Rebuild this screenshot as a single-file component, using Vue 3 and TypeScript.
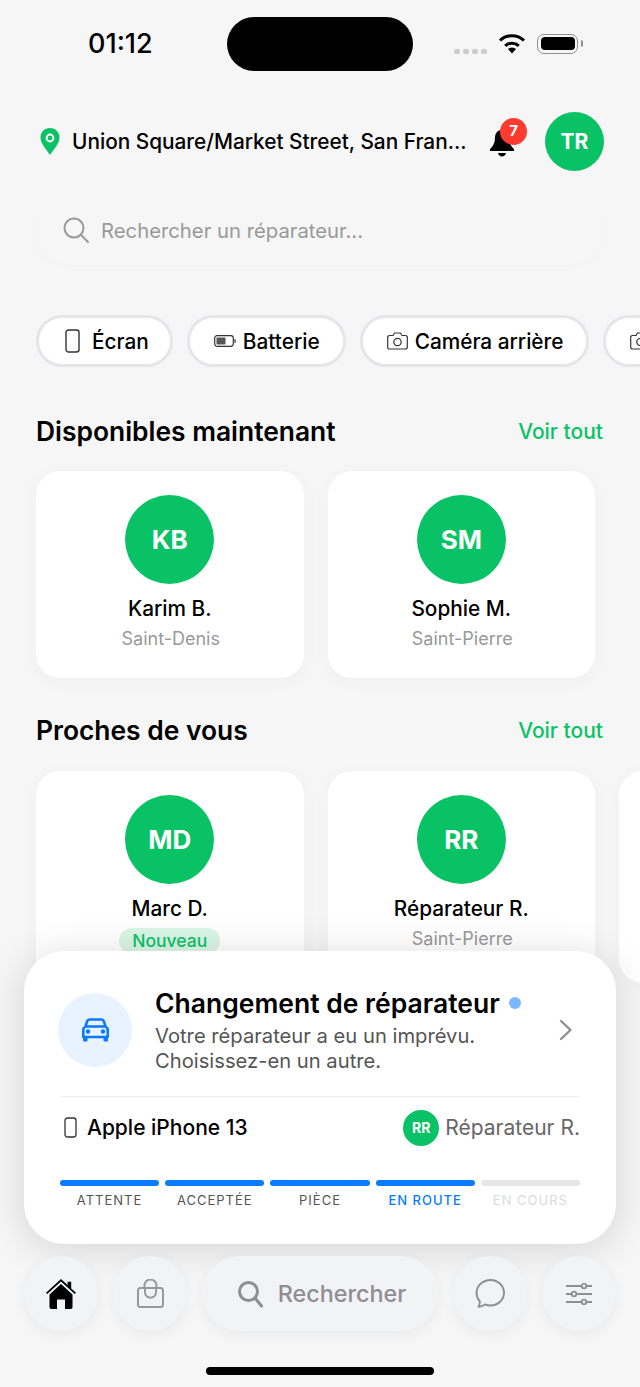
<template>
  <div class="screen">
    <!-- Status bar -->
    <div class="status-bar">
      <span class="time">01:12</span>
      <div class="island"></div>
      <div class="status-icons">
        <div class="signal"><i v-for="n in 4" :key="n"></i></div>
        <svg class="wifi" width="28" height="21" viewBox="0 0 28 21">
          <path d="M14 20.500 10 16a5.800 5.800 0 0 1 8 0Z" fill="#000" />
          <path d="M7.200 12.800a10 10 0 0 1 13.600 0" fill="none" stroke="#000" stroke-width="3" />
          <path d="M2 7.500a17.400 17.400 0 0 1 24 0" fill="none" stroke="#000" stroke-width="3" />
        </svg>
        <div class="battery"><div class="battery-fill"></div></div>
        <div class="battery-cap"></div>
      </div>
    </div>

    <!-- Location header -->
    <div class="header">
      <svg class="pin" width="20" height="27" viewBox="0 0 20 27">
        <path d="M10 0C4.500 0 .5 4.200.5 9.500.5 15.500 6 21 10 27c4-6 9.500-11.500 9.500-17.500C19.500 4.200 15.500 0 10 0Z" fill="#0ac266" />
        <circle cx="10" cy="10" r="3.400" fill="none" stroke="#fff" stroke-width="2" />
      </svg>
      <span class="location">Union Square/Market Street, San Fran...</span>
      <div class="bell">
        <svg width="26" height="27" viewBox="0 0 26 27">
          <path d="M13 0C8.500 0 6 3.500 6 8c0 5-2 8-4.800 11-.7.800-.3 2 .8 2h22c1.100 0 1.500-1.200.8-2C22 16 20 13 20 8c0-4.500-2.500-8-7-8Z" fill="#000" />
          <path d="M9 23h8c-.5 2.300-2 3.500-4 3.500S9.500 25.300 9 23Z" fill="#000" />
        </svg>
        <span class="bell-badge">7</span>
      </div>
      <div class="avatar-top">TR</div>
    </div>

    <!-- Search -->
    <div class="search">
      <svg width="28" height="28" viewBox="0 0 28 28" fill="none" stroke="#999" stroke-width="2">
        <circle cx="12" cy="12" r="9.500" />
        <path d="m19 19 7 7" stroke-linecap="round" />
      </svg>
      <span>Rechercher un réparateur...</span>
    </div>

    <!-- Category chips -->
    <div class="chips">
      <div class="chip chip-screen">
        <svg width="15" height="24" viewBox="0 0 15 24" fill="none" stroke="#333" stroke-width="1.400">
          <rect x="1" y="1" width="13" height="22" rx="2.500" />
        </svg>
        Écran
      </div>
      <div class="chip">
        <svg width="22" height="12" viewBox="0 0 22 12">
          <rect x=".7" y=".7" width="18.600" height="10.600" rx="2.500" fill="none" stroke="#333" stroke-width="1.200" />
          <rect x="2.500" y="2.500" width="9" height="7" rx="1" fill="#555" />
          <rect x="20.300" y="4" width="1.500" height="4" rx=".7" fill="#555" />
        </svg>
        Batterie
      </div>
      <div class="chip">
        <svg width="21" height="18" viewBox="0 0 21 18" fill="none" stroke="#333" stroke-width="1.200">
          <path d="M2.500 3.500h3.500l1.500-2.500h6l1.500 2.500h3.500a1.800 1.800 0 0 1 1.800 1.800v9.900a1.800 1.800 0 0 1-1.800 1.800h-16a1.800 1.800 0 0 1-1.800-1.800V5.300a1.800 1.800 0 0 1 1.800-1.800Z" />
          <circle cx="10.500" cy="10" r="3.700" />
        </svg>
        Caméra arrière
      </div>
      <div class="chip">
        <svg width="21" height="18" viewBox="0 0 21 18" fill="none" stroke="#333" stroke-width="1.200">
          <path d="M2.500 3.500h3.500l1.500-2.500h6l1.500 2.500h3.500a1.800 1.800 0 0 1 1.800 1.800v9.900a1.800 1.800 0 0 1-1.800 1.800h-16a1.800 1.800 0 0 1-1.800-1.800V5.300a1.800 1.800 0 0 1 1.800-1.800Z" />
          <circle cx="10.500" cy="10" r="3.700" />
        </svg>
        Caméra avant
      </div>
    </div>

    <!-- Repairer sections -->
    <section v-for="section in sections" :key="section.title" class="section">
      <div class="section-head">
        <h2>{{ section.title }}</h2>
        <span class="see-all">Voir tout</span>
      </div>
      <div class="cards">
        <div v-for="card in section.cards" :key="card.initials" class="card">
          <div class="avatar">{{ card.initials }}</div>
          <div class="name">{{ card.name }}</div>
          <div v-if="card.isNew" class="badge">Nouveau</div>
          <div v-else class="city">{{ card.city }}</div>
        </div>
      </div>
    </section>

    <!-- Floating order card -->
    <div class="order-card">
      <div class="order-top">
        <div class="car-circle">
          <svg width="27" height="24" viewBox="0 0 27 24">
            <path fill="none" stroke="#0a7aff" stroke-width="2.600" stroke-linejoin="round" d="M8 1.500h11c1.500 0 2.500.7 3 2.200l1.500 4.800c1.300.8 2.200 2 2.200 3.500V19H1.300v-7c0-1.500.9-2.700 2.200-3.500L5 3.700c.5-1.500 1.500-2.200 3-2.200ZM3.500 8.500h20" />
            <circle cx="6" cy="13.500" r="2.200" fill="#0a7aff" />
            <circle cx="21" cy="13.500" r="2.200" fill="#0a7aff" />
            <path d="M1 19h4.500v3.200c0 .8-.5 1.300-1.200 1.300H2.200c-.7 0-1.200-.5-1.200-1.300Zm20.500 0H26v3.200c0 .8-.5 1.300-1.200 1.300h-2.100c-.7 0-1.200-.5-1.200-1.300Z" fill="#0a7aff" />
          </svg>
        </div>
        <div class="order-text">
          <div class="order-title">Changement de réparateur<i class="dot"></i></div>
          <div class="order-sub">Votre réparateur a eu un imprévu.<br />Choisissez-en un autre.</div>
        </div>
        <svg class="chevron" width="14" height="22" viewBox="0 0 14 22" fill="none" stroke="#8e8e93" stroke-width="2.400">
          <path d="m2 2 9.500 9L2 20" stroke-linecap="round" stroke-linejoin="round" />
        </svg>
      </div>
      <div class="order-meta">
        <svg width="13" height="21" viewBox="0 0 13 21" fill="none" stroke="#333" stroke-width="1.300">
          <rect x="1" y="1" width="11" height="19" rx="2.500" />
        </svg>
        <span class="device">Apple iPhone 13</span>
        <div class="mini-avatar">RR</div>
        <span class="repairer">Réparateur R.</span>
      </div>
      <div class="steps">
        <div v-for="step in steps" :key="step.label" class="step" :class="step.state">
          <div class="bar"></div>
          <span>{{ step.label }}</span>
        </div>
      </div>
    </div>

    <!-- Bottom navigation -->
    <div class="nav">
      <div class="nav-btn">
        <svg width="30" height="30" viewBox="0 0 30 30">
          <path d="M15 0 0 13.800l1.200 1.300L15 2.500l13.800 12.600 1.200-1.300-4.800-4.400V2.800h-3.600v3.300Z" fill="#000" />
          <path d="M15 5 3.500 15.500V28c0 1.200.7 2 1.800 2H11v-9.500h8V30h5.700c1.100 0 1.800-.8 1.800-2V15.500Z" fill="#000" />
        </svg>
      </div>
      <div class="nav-btn">
        <svg width="27" height="29" viewBox="0 0 27 29" fill="none" stroke="#999" stroke-width="2">
          <rect x="1" y="9" width="25" height="19" rx="2.500" />
          <path d="M7.500 9V6.500a6 6 0 0 1 12 0V9" />
          <path d="M8 9v4c0 7.500 11 7.500 11 0V9" />
        </svg>
      </div>
      <div class="nav-search">
        <svg width="26" height="28" viewBox="0 0 26 28" fill="none" stroke="#8e8e93" stroke-width="3">
          <circle cx="11.500" cy="11.500" r="9" />
          <path d="m18 18 6.500 8" stroke-linecap="round" />
        </svg>
        <span>Rechercher</span>
      </div>
      <div class="nav-btn">
        <svg width="30" height="29" viewBox="0 0 30 29" fill="none" stroke="#8e8e93" stroke-width="1.900">
          <path d="M15.500 1c7.500 0 13.500 5.800 13.500 12.800s-6 12.700-13.500 12.700c-2.200 0-4-.5-5.500-1.100-1.800 1.300-4 2.200-6.500 2.400 1-1.500 1.500-3.500 1.300-5.400C2.700 20 1.500 17 1.500 13.800 1.500 6.800 8 1 15.500 1Z" stroke-linejoin="round" />
        </svg>
      </div>
      <div class="nav-btn">
        <svg width="26" height="22" viewBox="0 0 26 22" fill="none" stroke="#8e8e93" stroke-width="1.800">
          <path d="M0 3h26M0 11h26M0 19h26" />
          <circle cx="18" cy="3" r="2.300" fill="#f2f3f5" />
          <circle cx="8" cy="11" r="2.300" fill="#f2f3f5" />
          <circle cx="18" cy="19" r="2.300" fill="#f2f3f5" />
        </svg>
      </div>
    </div>

    <div class="home-indicator"></div>
  </div>
</template>

<script setup lang="ts">
interface Card {
  initials: string;
  name: string;
  city?: string;
  isNew?: boolean;
}

const sections: { title: string; cards: Card[] }[] = [
  {
    title: 'Disponibles maintenant',
    cards: [
      { initials: 'KB', name: 'Karim B.', city: 'Saint-Denis' },
      { initials: 'SM', name: 'Sophie M.', city: 'Saint-Pierre' },
    ],
  },
  {
    title: 'Proches de vous',
    cards: [
      { initials: 'MD', name: 'Marc D.', isNew: true },
      { initials: 'RR', name: 'Réparateur R.', city: 'Saint-Pierre' },
      { initials: 'LP', name: 'Lucas P.', city: 'Saint-Denis' },
    ],
  },
];

const steps = [
  { label: 'ATTENTE', state: 'done' },
  { label: 'ACCEPTÉE', state: 'done' },
  { label: 'PIÈCE', state: 'done' },
  { label: 'EN ROUTE', state: 'current' },
  { label: 'EN COURS', state: 'todo' },
];
</script>

<style>
html,
body {
  background: #f6f6f6;
}
</style>

<style scoped>
.screen {
  position: relative;
  width: 640px;
  height: 1387px;
  overflow: hidden;
  background: #f6f6f6;
  color: #000;
  font-family: Inter, "Liberation Sans", sans-serif;
}

.status-bar {
  display: flex;
  align-items: flex-start;
  height: 112px;
  padding-top: 17px;
  padding-left: 88px;
  box-sizing: border-box;
}
.time {
  width: 139px;
  margin-top: 11px;
  font-size: 27px;
  font-weight: 500;
  line-height: 32px;
}
.island {
  width: 186px;
  height: 54px;
  border-radius: 27px;
  background: #000;
}
.status-icons {
  display: flex;
  align-items: center;
  margin-left: 41px;
  margin-top: 16px;
}
.signal {
  display: flex;
  gap: 3px;
  margin-top: 15px;
  margin-right: 11px;
}
.signal i {
  width: 6px;
  height: 5px;
  border-radius: 2px;
  background: #ccc;
}
.wifi {
  margin-right: 11px;
}
.battery {
  width: 41px;
  height: 20px;
  padding: 2.500px;
  box-sizing: border-box;
  border: 1.500px solid #8e8e93;
  border-radius: 7px;
}
.battery-fill {
  height: 100%;
  border-radius: 4px;
  background: #000;
}
.battery-cap {
  width: 2px;
  height: 7px;
  margin-left: 3px;
  border-radius: 0 2px 2px 0;
  background: #8e8e93;
}

.header {
  display: flex;
  align-items: center;
  height: 59px;
  padding: 0 36px 0 40px;
}
.location {
  width: 400px;
  margin-top: -1px;
  margin-left: 12px;
  font-size: 20.800px;
  font-weight: 500;
  white-space: nowrap;
}
.bell {
  position: relative;
  width: 26px;
  height: 27px;
  margin-left: 17px;
  margin-top: 3px;
}
.bell-badge {
  position: absolute;
  top: -12px;
  left: 11px;
  width: 27px;
  height: 27px;
  border-radius: 50%;
  background: #ff3b30;
  color: #fff;
  font-size: 15px;
  font-weight: 700;
  line-height: 26px;
  text-align: center;
}
.avatar-top {
  width: 59px;
  height: 59px;
  margin-left: auto;
  border-radius: 50%;
  background: #0ac266;
  color: #fff;
  font-size: 21px;
  font-weight: 700;
  line-height: 59px;
  text-align: center;
}

.search {
  display: flex;
  align-items: center;
  gap: 11px;
  height: 70px;
  margin: 24px 36px 0;
  padding-left: 26px;
  border-radius: 35px;
  background: #f6f6f6;
  box-shadow: 0 2px 12px rgba(0, 0, 0, 0.015);
  color: #999;
  font-size: 20.300px;
}

.chips {
  display: flex;
  gap: 14px;
  margin-top: 50px;
  padding-left: 36px;
}
.chip {
  display: flex;
  flex-shrink: 0;
  align-items: center;
  gap: 7px;
  height: 52px;
  padding: 0 23px 0 24px;
  box-sizing: border-box;
  border: 3px solid #e5e5ea;
  border-radius: 26px;
  background: #fff;
  font-size: 20.800px;
  font-weight: 500;
  white-space: nowrap;
}
.chip-screen {
  gap: 12px;
  padding: 0 21px 0 26px;
}

.section {
  margin-top: 46px;
}
.section + .section {
  margin-top: 34px;
}
.section-head {
  display: flex;
  align-items: center;
  justify-content: space-between;
  height: 36px;
  padding: 0 37px 0 36px;
}
.section-head h2 {
  margin: 0;
  font-size: 26.400px;
  font-weight: 600;
}
.see-all {
  color: #0ac266;
  font-size: 21px;
  font-weight: 500;
}
.cards {
  display: flex;
  gap: 24px;
  margin-top: 22px;
  padding-left: 36px;
}
.section + .section .cards {
  margin-top: 23px;
}
.card {
  flex-shrink: 0;
  width: 267.500px;
  height: 207px;
  padding-top: 24px;
  box-sizing: border-box;
  border-radius: 24px;
  background: #fff;
  box-shadow: 0 4px 20px rgba(0, 0, 0, 0.03);
  text-align: center;
}
.section + .section .card {
  height: 212px;
}
.avatar {
  width: 89px;
  height: 89px;
  margin: 0 auto;
  border-radius: 50%;
  background: #0ac266;
  color: #fff;
  font-size: 26px;
  font-weight: 700;
  line-height: 89px;
}
.name {
  margin-top: 12px;
  font-size: 20.800px;
  font-weight: 500;
  line-height: 26px;
}
.city {
  margin-top: 5px;
  padding-left: 2px;
  color: #999;
  font-size: 18px;
  line-height: 24px;
}
.badge {
  display: inline-block;
  margin-top: 6px;
  padding: 0 13px;
  border-radius: 13px;
  background: #d9f5e5;
  color: #0ac266;
  font-size: 17.500px;
  font-weight: 500;
  line-height: 26px;
}

.order-card {
  position: absolute;
  top: 951px;
  left: 24px;
  width: 592px;
  height: 293px;
  padding: 42px 36px 0;
  box-sizing: border-box;
  border-radius: 40px;
  background: #fff;
  box-shadow: 0 4px 40px rgba(0, 0, 0, 0.14);
}
.order-top {
  display: flex;
  align-items: center;
  height: 74px;
  margin-left: -2px;
}
.car-circle {
  display: flex;
  flex-shrink: 0;
  align-items: center;
  justify-content: center;
  width: 74px;
  height: 74px;
  border-radius: 50%;
  background: #e8f3ff;
}
.order-text {
  width: 400px;
  margin-left: 23px;
}
.order-title {
  display: flex;
  align-items: center;
  font-size: 26.500px;
  font-weight: 600;
  line-height: 30px;
  white-space: nowrap;
}
.dot {
  width: 12px;
  height: 12px;
  margin-left: 9px;
  border-radius: 50%;
  background: #7ab8ff;
}
.order-sub {
  margin-top: 5px;
  color: #555;
  font-size: 20.200px;
  line-height: 25px;
  white-space: nowrap;
}
.chevron {
  margin-left: 4px;
}
.order-meta {
  display: flex;
  align-items: center;
  height: 61px;
  margin-top: 29px;
  padding-left: 4px;
  border-top: 1px solid #eee;
}
.device {
  margin-left: 10px;
  font-size: 21px;
  font-weight: 500;
}
.mini-avatar {
  width: 36px;
  height: 36px;
  margin-left: auto;
  border-radius: 50%;
  background: #0ac266;
  color: #fff;
  font-size: 14px;
  font-weight: 700;
  line-height: 36px;
  text-align: center;
}
.repairer {
  margin-left: 6px;
  color: #666;
  font-size: 21px;
}
.steps {
  display: flex;
  gap: 6px;
  margin-top: 22px;
}
.step {
  flex: 1;
  text-align: center;
  font-size: 13px;
  letter-spacing: 1px;
  color: #555;
}
.bar {
  height: 6px;
  margin-bottom: 6px;
  border-radius: 3px;
  background: #0a7aff;
}
.step.current {
  color: #0a7aff;
  font-weight: 500;
}
.step.todo {
  color: #d8dae0;
}
.step.todo .bar {
  background: #e5e5ea;
}

.nav {
  position: absolute;
  top: 1256px;
  left: 24px;
  display: flex;
  gap: 15px;
  width: 592px;
}
.nav-btn,
.nav-search {
  display: flex;
  flex-shrink: 0;
  align-items: center;
  justify-content: center;
  height: 75px;
  background: #f2f3f5;
  box-shadow: 0 4px 14px rgba(0, 0, 0, 0.05);
}
.nav-btn {
  width: 74px;
  border-radius: 50%;
}
.nav-search {
  flex: 1;
  gap: 15px;
  padding-left: 3px;
  border-radius: 38px;
  color: #8e8e93;
  font-size: 23.300px;
  font-weight: 500;
}

.home-indicator {
  position: absolute;
  bottom: 12px;
  left: 206px;
  width: 228px;
  height: 8px;
  border-radius: 4px;
  background: #000;
}
</style>
